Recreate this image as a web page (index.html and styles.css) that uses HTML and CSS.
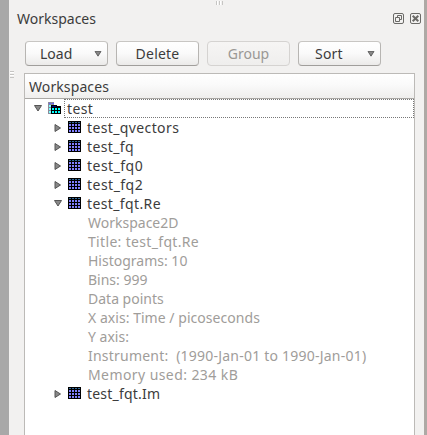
FILE: index.html
```html
<!DOCTYPE html>
<html lang="en">
<head>
<meta charset="utf-8">
<title>Workspaces</title>
<link rel="stylesheet" href="styles.css">
</head>
<body>
<svg width="0" height="0" class="defs">
  <symbol id="grid" viewBox="0 0 13 12"><path fill="#000" d="M0 0h13v12H0z"/><path fill="#336b9b" d="M1 1h2v1H1zM4 1h2v1H4zM7 1h2v1H7zM10 1h2v1h-2z"/><path fill="#8080ff" d="M1 3h2v2H1zM4 3h2v2H4zM7 3h2v2H7zM10 3h2v2h-2zM1 6h2v2H1zM4 6h2v2H4zM7 6h2v2H7zM10 6h2v2h-2zM1 9h2v2H1zM4 9h2v2H4zM7 9h2v2H7zM10 9h2v2h-2z"/></symbol>
  <symbol id="down" viewBox="0 0 8 7"><path d="M.5 .5h7L4 6z" fill="#888" stroke="#555"/></symbol>
  <symbol id="right" viewBox="0 0 7 8"><path d="M.5 .5v7L6 4z" fill="#888" stroke="#555"/></symbol>
</svg>
<main class="dock">
  <i class="grip-top"></i><i class="grip-left"></i>
  <header class="title"><span>Workspaces</span>
    <svg class="controls" width="28" height="11" viewBox="0 0 28 11" fill="none" stroke="#6b6a67"><rect x=".5" y=".5" width="10" height="10" rx="1.5"/><path d="M4.5 4V2.5h4v4H7M2.5 4.5h4v4h-4z"/><rect x="17.5" y=".5" width="10" height="10" rx="1.5"/><path stroke-width="2" d="M19.7 2.7l5.6 5.6M25.3 2.7l-5.6 5.6"/></svg>
  </header>
  <div class="buttons">
    <button class="menu"><span>Load</span><svg width="8" height="6"><use href="#down"/></svg></button>
    <button><span class="t-delete">Delete</span></button>
    <button class="off" disabled><span>Group</span></button>
    <button class="menu"><span class="t-sort">Sort</span><svg width="8" height="6"><use href="#down"/></svg></button>
  </div>
  <section class="tree">
    <div class="head"><span class="t-head">Workspaces</span></div>
    <div class="root"><svg class="arrow" width="8" height="7"><use href="#down"/></svg>
      <svg class="group" width="13" height="12" viewBox="0 0 13 12" shape-rendering="crispEdges"><path fill="#8b8b9b" d="M0 0h6v12H0z"/><path fill="#6464ff" d="M1 1h2v1H1zM4 1h2v1H4z"/><path fill="#80ffff" d="M1 3h2v2H1zM1 6h2v2H1zM1 9h2v2H1z"/><path fill="#000" d="M3 3h6v1h4v8H3z"/><path fill="#000080" d="M4 4h4v1H4z"/><path fill="#00ffff" d="M4 6h2v2H4zM7 6h2v2H7zM10 6h2v2h-2zM4 9h2v2H4zM7 9h2v2H7zM10 9h2v2h-2z"/></svg>
      <span class="focus"><span class="name">test</span></span></div>
    <div class="row"><svg class="arrow" width="7" height="8"><use href="#right"/></svg><svg class="icon" width="13" height="12"><use href="#grid"/></svg><span class="name">test_qvectors</span></div>
    <div class="row"><svg class="arrow" width="7" height="8"><use href="#right"/></svg><svg class="icon" width="13" height="12"><use href="#grid"/></svg><span class="name">test_fq</span></div>
    <div class="row"><svg class="arrow" width="7" height="8"><use href="#right"/></svg><svg class="icon" width="13" height="12"><use href="#grid"/></svg><span class="name wide">test_fq0</span></div>
    <div class="row"><svg class="arrow" width="7" height="8"><use href="#right"/></svg><svg class="icon" width="13" height="12"><use href="#grid"/></svg><span class="name wide">test_fq2</span></div>
    <div class="row"><svg class="arrow" width="8" height="7"><use href="#down"/></svg><svg class="icon" width="13" height="12"><use href="#grid"/></svg><span class="name">test_fqt.Re</span></div>
    <div class="detail">Workspace2D</div>
    <div class="detail data-title">Title: test_fqt.Re</div>
    <div class="detail">Histograms: 10</div>
    <div class="detail">Bins: 999</div>
    <div class="detail">Data points</div>
    <div class="detail axis">X axis: Time / picoseconds</div>
    <div class="detail">Y axis:</div>
    <div class="detail instrument">Instrument:  (1990-Jan-01 to 1990-Jan-01)</div>
    <div class="detail memory">Memory used: 234 kB</div>
    <div class="row"><svg class="arrow" width="7" height="8"><use href="#right"/></svg><svg class="icon" width="13" height="12"><use href="#grid"/></svg><span class="name narrow">test_fqt.Im</span></div>
  </section>
</main>
</body>
</html>
```
FILE: styles.css
```css
* { box-sizing: border-box; }
body { margin: 0; height: 435px; overflow: hidden; font: 14px/19px "Noto Sans", sans-serif; color: #3c3c3c; }
.defs { position: absolute; }
.dock { position: relative; height: 435px; background: #f2f1f0; border-left: 9px solid #a8a8a8; border-right: 3px solid #aea9a5; padding: 9px 9px 0 15px; display: flex; flex-direction: column; }
.grip-top { position: absolute; left: 207px; top: 1px; width: 7px; height: 4px; background: repeating-linear-gradient(90deg, #c6c5c3 0 1px, #fff 1px 2px, transparent 2px 3px); }
.grip-left { position: absolute; left: 1px; top: 71px; width: 4px; height: 7px; background: repeating-linear-gradient(#c6c5c3 0 1px, #fff 1px 2px, transparent 2px 3px); }
.title { display: flex; height: 20px; margin-left: -7px; align-items: center; justify-content: space-between; }
.title span { position: relative; top: -1px; }
.controls { margin: 0 -6px 1px 0; }
.buttons { display: flex; gap: 8px; margin: 12px 0 7px 1px; }
button { width: 83px; height: 25px; padding: 0; border: 1px solid #b7b5b2; border-top-color: #c8c6c3; border-bottom-color: #a09e9b; border-radius: 4px; background: linear-gradient(#fff, #fafafa 50%, #ebeae9); font: inherit; color: inherit; display: flex; align-items: center; justify-content: center; }
.menu { justify-content: space-between; padding: 0 5px 0 14px; }
.menu:last-child { padding-left: 16px; }
.off { color: #9a9895; border-color: #d5d3d1; background: linear-gradient(#f6f5f4, #efeeed); }
.t-delete, .t-sort { letter-spacing: .2px; }
.t-head { letter-spacing: .1px; }
.tree { flex: 1; background: #fff; border: 1px solid #bcbab7; border-bottom: 0; }
.head { height: 25px; padding: 3px 0 0 4px; border-bottom: 1px solid #aaa8a5; background: linear-gradient(#fff, #fafafa 45%, #efeeed); }
.root, .row { display: flex; align-items: center; height: 19px; }
.root { padding-left: 9px; }
.group { margin: 0 0 1px 6px; }
.focus { flex: 1; height: 19px; margin-left: 3px; border: 1px dotted #777; padding-left: 2px; line-height: 17px; }
.row { padding-left: 29px; }
.row .arrow { width: 8px; margin-right: 6px; }
.icon { margin: 0 6px 1px 0; shape-rendering: crispEdges; }
.name { letter-spacing: .38px; }
.name.wide { letter-spacing: .48px; }
.name.narrow { letter-spacing: .2px; }
.detail { height: 19px; padding-left: 63px; color: #9f9d9a; white-space: pre; }
.data-title { letter-spacing: .33px; }
.axis { letter-spacing: .04px; }
.instrument { letter-spacing: .22px; }
.memory { letter-spacing: .42px; }
```
